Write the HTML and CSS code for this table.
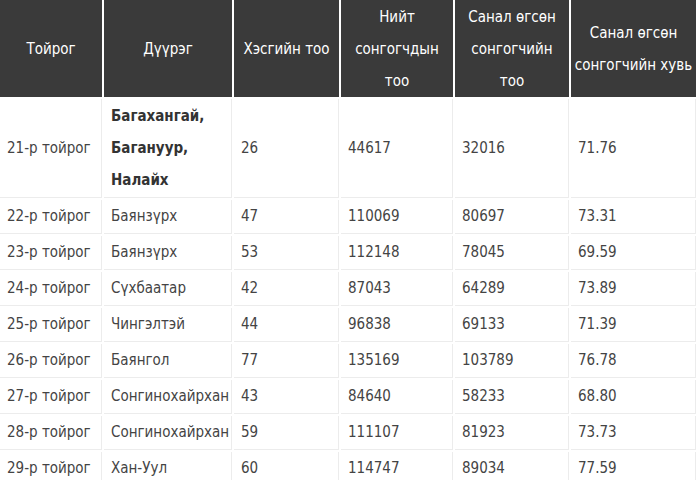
FILE: index.html
```html
<!DOCTYPE html>
<html lang="mn">
<head>
<meta charset="utf-8">
<link rel="stylesheet" href="styles.css">
</head>
<body>
<table class="results">
  <colgroup>
    <col class="c1"><col class="c2"><col class="c3"><col class="c4"><col class="c5"><col class="c6">
  </colgroup>
  <thead>
    <tr>
      <th>Тойрог</th>
      <th>Дүүрэг</th>
      <th>Хэсгийн тоо</th>
      <th>Нийт сонгогчдын тоо</th>
      <th>Санал өгсөн сонгогчийн тоо</th>
      <th><span class="nw">Санал өгсөн</span> <span class="nw">сонгогчийн хувь</span></th>
    </tr>
  </thead>
  <tbody>
    <tr><td>21-р тойрог</td><td class="strong">Багахангай, Багануур, Налайх</td><td>26</td><td>44617</td><td>32016</td><td>71.76</td></tr>
    <tr><td>22-р тойрог</td><td>Баянзүрх</td><td>47</td><td>110069</td><td>80697</td><td>73.31</td></tr>
    <tr><td>23-р тойрог</td><td>Баянзүрх</td><td>53</td><td>112148</td><td>78045</td><td>69.59</td></tr>
    <tr><td>24-р тойрог</td><td>Сүхбаатар</td><td>42</td><td>87043</td><td>64289</td><td>73.89</td></tr>
    <tr><td>25-р тойрог</td><td>Чингэлтэй</td><td>44</td><td>96838</td><td>69133</td><td>71.39</td></tr>
    <tr><td>26-р тойрог</td><td>Баянгол</td><td>77</td><td>135169</td><td>103789</td><td>76.78</td></tr>
    <tr><td>27-р тойрог</td><td>Сонгинохайрхан</td><td>43</td><td>84640</td><td>58233</td><td>68.80</td></tr>
    <tr><td>28-р тойрог</td><td>Сонгинохайрхан</td><td>59</td><td>111107</td><td>81923</td><td>73.73</td></tr>
    <tr><td>29-р тойрог</td><td>Хан-Уул</td><td>60</td><td>114747</td><td>89034</td><td>77.59</td></tr>
  </tbody>
</table>
</body>
</html>
```
FILE: styles.css
```css
html, body {
  margin: 0;
  padding: 0;
  background: #fff;
  overflow: hidden;
}
.results {
  margin: -2px;
  border-collapse: separate;
  border-spacing: 2px;
  table-layout: fixed;
  width: 700px;
  font-family: "DejaVu Sans Condensed", "DejaVu Sans", sans-serif;
  font-stretch: condensed;
  font-size: 15px;
  line-height: 31px;
  color: #444;
}
.c1 { width: 102px; }
.c2 { width: 128px; }
.c3 { width: 105px; }
.c4 { width: 112px; }
.c5 { width: 114px; }
.c6 { width: 125px; }
.results th {
  background: #3a3a3a;
  color: #fff;
  font-weight: normal;
  text-align: center;
  vertical-align: middle;
  padding: 0 3px;
  height: 97px;
  line-height: 32px;
}
.nw {
  white-space: nowrap;
}
.results td {
  padding: 1px 7px 1px 7px;
  text-align: left;
  vertical-align: middle;
  border-right: 1px solid #ececec;
  border-bottom: 1px solid #ececec;
  white-space: nowrap;
}
.results td.strong {
  font-weight: bold;
  white-space: normal;
  line-height: 32px;
  color: #333;
}
```
